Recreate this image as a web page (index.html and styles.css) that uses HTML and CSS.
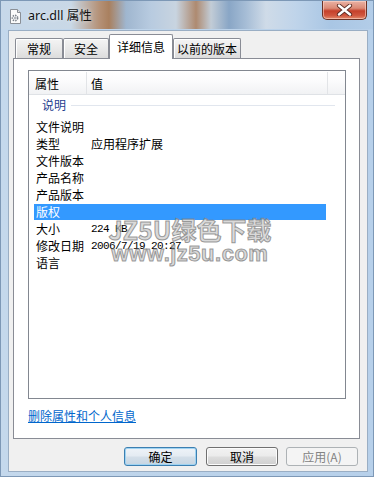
FILE: index.html
```html
<!DOCTYPE html>
<html>
<head>
<meta charset="utf-8">
<title>arc.dll 属性</title>
<link rel="stylesheet" href="styles.css">
</head>
<body>
<div class="window">
  <div class="titlebar">
    <svg class="appicon" width="13" height="15" viewBox="0 0 13 15">
      <path d="M1.5 0.5 H8.5 L11.5 3.5 V14.5 H1.5 Z" fill="#fbfbfb" stroke="#8a8f96"/>
      <path d="M8.5 0.5 V3.5 H11.5" fill="#e6e6e6" stroke="#8a8f96"/>
      <circle cx="6" cy="9" r="2.6" fill="none" stroke="#7b828b" stroke-width="1.6" stroke-dasharray="1.4 1"/>
      <circle cx="6" cy="9" r="1" fill="#9aa1a9"/>
    </svg>
    <span class="title">arc.dll 属性</span>
    <div class="close">
      <svg width="17" height="12" viewBox="0 0 17 12">
        <path d="M3 1.5 L14 10.5 M14 1.5 L3 10.5" stroke="#5a2a22" stroke-width="4.2" stroke-linecap="round"/>
        <path d="M3 1.5 L14 10.5 M14 1.5 L3 10.5" stroke="#ffffff" stroke-width="2.4" stroke-linecap="round"/>
      </svg>
    </div>
  </div>
  <div class="client">
    <div class="tabs">
      <div class="tab tab-a">常规</div>
      <div class="tab tab-b">安全</div>
      <div class="tab tab-sel">详细信息</div>
      <div class="tab tab-d">以前的版本</div>
    </div>
    <div class="panel">
      <div class="list">
        <div class="lhead">
          <div class="hc hc1">属性</div>
          <div class="hc hc2">值</div>
          <div class="hc hc3"></div>
        </div>
        <div class="group"><span class="gname">说明</span><span class="gline"></span></div>
        <div class="row"><span class="k">文件说明</span><span class="v"></span></div>
        <div class="row"><span class="k">类型</span><span class="v">应用程序扩展</span></div>
        <div class="row"><span class="k">文件版本</span><span class="v"></span></div>
        <div class="row"><span class="k">产品名称</span><span class="v"></span></div>
        <div class="row"><span class="k">产品版本</span><span class="v"></span></div>
        <div class="row selected"><span class="k">版权</span><span class="v"></span></div>
        <div class="row"><span class="k">大小</span><span class="v num">224 KB</span></div>
        <div class="row"><span class="k">修改日期</span><span class="v num">2006/7/19 20:27</span></div>
        <div class="row"><span class="k">语言</span><span class="v"></span></div>
      </div>
      <a class="link" href="#">删除属性和个人信息</a>
    </div>
    <div class="buttons">
      <div class="btn btn-default">确定</div>
      <div class="btn btn-cancel">取消</div>
      <div class="btn btn-disabled">应用(<u>A</u>)</div>
    </div>
  </div>
  <div class="watermark">
    <div class="wm1">JZ5U绿色下载</div>
    <div class="wm2">www.jz5u.com</div>
  </div>
</div>
</body>
</html>
```

FILE: styles.css
```css
* { box-sizing: border-box; }
html, body { margin: 0; padding: 0; }
body {
  width: 374px;
  height: 477px;
  overflow: hidden;
  font-family: "Noto Sans CJK SC", "Noto Sans", sans-serif;
  font-size: 12px;
  color: #000;
}
.window {
  position: relative;
  width: 374px;
  height: 477px;
  display: flex;
  flex-direction: column;
  padding: 0 5px 4px 7px;
  background: linear-gradient(90deg, #c4d8ec 0%, #bcd3ea 50%, #b7d0ea 100%);
  border: 1px solid #7d98b6;
}
.titlebar {
  height: 28px;
  margin: 0 -5px 0 -7px;
  display: flex;
  align-items: flex-start;
  background:
    linear-gradient(90deg,
      #c6d8ea 0px, #c9d8e6 70px, #b59278 98px, #a9805f 108px, #9fb6cf 125px,
      #b8cbe0 150px, #c8d4e0 175px, #ae8a70 195px, #c2ccd6 210px,
      #89a6c6 228px, #a6bdd6 245px, #cfdbe8 265px, #bfd4ea 295px, #a9c6e4 330px, #b3cde8 374px);
}
.appicon {
  margin: 8px 0 0 8px;
  flex: none;
}
.title {
  margin: 6px 0 0 6px;
  font-family: "Noto Sans", "Noto Sans CJK SC", sans-serif;
  font-size: 12.5px;
  line-height: 17px;
  color: #111;
  text-shadow: 0 0 4px rgba(255,255,255,0.7);
}
.close {
  margin-left: auto;
  margin-right: 6px;
  width: 45px;
  height: 19px;
  border: 1px solid #6b3226;
  border-top: none;
  border-radius: 0 0 5px 5px;
  background: linear-gradient(#eab2a4 0%, #db8a76 40%, #c5402a 55%, #d0563e 80%, #e38b6c 100%);
  box-shadow: inset 0 0 0 1px rgba(255,220,210,0.55);
  display: flex;
  align-items: center;
  justify-content: center;
}
.client {
  flex: 1;
  margin-top: 1px;
  background: #f0f0f0;
  border: 1px solid #9aaec4;
  padding: 3px 9px 0 4px;
  display: flex;
  flex-direction: column;
}
.tabs {
  height: 24px;
  display: flex;
  align-items: flex-end;
  padding-left: 2px;
}
.tab {
  height: 20px;
  line-height: 19px;
  text-align: center;
  border: 1px solid #898c95;
  border-bottom: none;
  background: linear-gradient(#f4f4f4, #e9e9e9 50%, #dcdcdc);
  box-shadow: inset 1px 1px 0 #fff;
  border-radius: 2px 2px 0 0;
  white-space: nowrap;
}
.tab-a { width: 48px; }
.tab-b { width: 46px; }
.tab-sel {
  width: 64px;
  height: 25px;
  line-height: 24px;
  margin-bottom: -1px;
  background: #fff;
  box-shadow: none;
  position: relative;
  z-index: 1;
}
.tab-d { width: 68px; }
.panel {
  width: 347px;
  height: 381px;
  background: #fff;
  border: 1px solid #898c95;
  padding: 11px 0 0 14px;
  display: flex;
  flex-direction: column;
  align-items: flex-start;
}
.list {
  width: 318px;
  height: 329px;
  border: 1px solid #828790;
  display: flex;
  flex-direction: column;
}
.lhead {
  height: 24px;
  display: flex;
  background: linear-gradient(#ffffff, #fbfbfc 45%, #f1f2f4);
  border-bottom: 1px solid #dfe2e6;
  line-height: 23px;
  padding-top: 1px;
}
.hc { height: 22px; }
.hc1 { width: 58px; padding-left: 6px; border-right: 1px solid #e2e4e7; }
.hc2 { width: 241px; padding-left: 4px; border-right: 1px solid #e2e4e7; }
.hc3 { flex: 1; }
.group {
  height: 24px;
  display: flex;
  align-items: flex-start;
  padding: 2px 0 0 13px;
}
.gname {
  color: #1e3d8f;
  line-height: 16px;
}
.gline {
  width: 264px;
  height: 1px;
  margin: 8px 0 0 5px;
  background: #e1e6ee;
}
.row {
  height: 17px;
  padding-bottom: 1px;
  display: flex;
}
.row .k, .row .v {
  line-height: 16px;
  white-space: nowrap;
}
.row .k {
  width: 62px;
  padding-left: 7px;
}
.row.selected {
  margin-left: 5px;
  width: 292px;
}
.row.selected .k {
  width: 57px;
  padding-left: 2px;
}
.row.selected .k, .row.selected .v {
  background: #3399ff;
  color: #fff;
}
.row.selected .v { flex: 1; }
.num {
  font-family: "Liberation Mono", monospace;
  font-size: 11px;
  letter-spacing: -0.6px;
}
.link {
  margin-top: 9px;
  line-height: 16px;
  color: #0066cc;
  text-decoration: underline;
}
.buttons {
  margin-top: 8px;
  display: flex;
  justify-content: flex-end;
}
.btn {
  height: 19px;
  width: 72px;
  line-height: 17px;
  text-align: center;
  border-radius: 3px;
  border: 1px solid #707070;
  background: linear-gradient(#f2f2f2 0%, #ebebeb 48%, #dddddd 52%, #cfcfcf 100%);
  box-shadow: inset 0 0 0 1px #fcfcfc;
}
.btn-default {
  width: 73px;
  border-color: #3c7fb1;
  background: linear-gradient(#eef3f8 0%, #e4ebf2 48%, #d4dfe9 52%, #c6d5e2 100%);
  box-shadow: inset 0 0 0 1px #9fd3f2;
}
.btn-cancel { margin-left: 9px; }
.btn-disabled {
  margin-left: 8px;
  border-color: #adb2b5;
  background: #f4f4f4;
  box-shadow: none;
  color: #838383;
}
.btn-disabled u { text-decoration: none; }
.watermark {
  position: absolute;
  left: 103px;
  top: 213px;
  width: 172px;
  text-align: center;
  color: rgba(200,200,200,0.7);
  font-weight: 700;
  -webkit-text-stroke: 1px rgba(125,125,125,0.75);
  pointer-events: none;
}
.wm1 {
  font-family: "Noto Sans CJK SC", sans-serif;
  font-size: 25px;
  line-height: 30px;
}
.wm2 {
  font-family: "Liberation Sans", sans-serif;
  font-size: 22px;
  line-height: 20px;
  letter-spacing: 0.5px;
}
```
